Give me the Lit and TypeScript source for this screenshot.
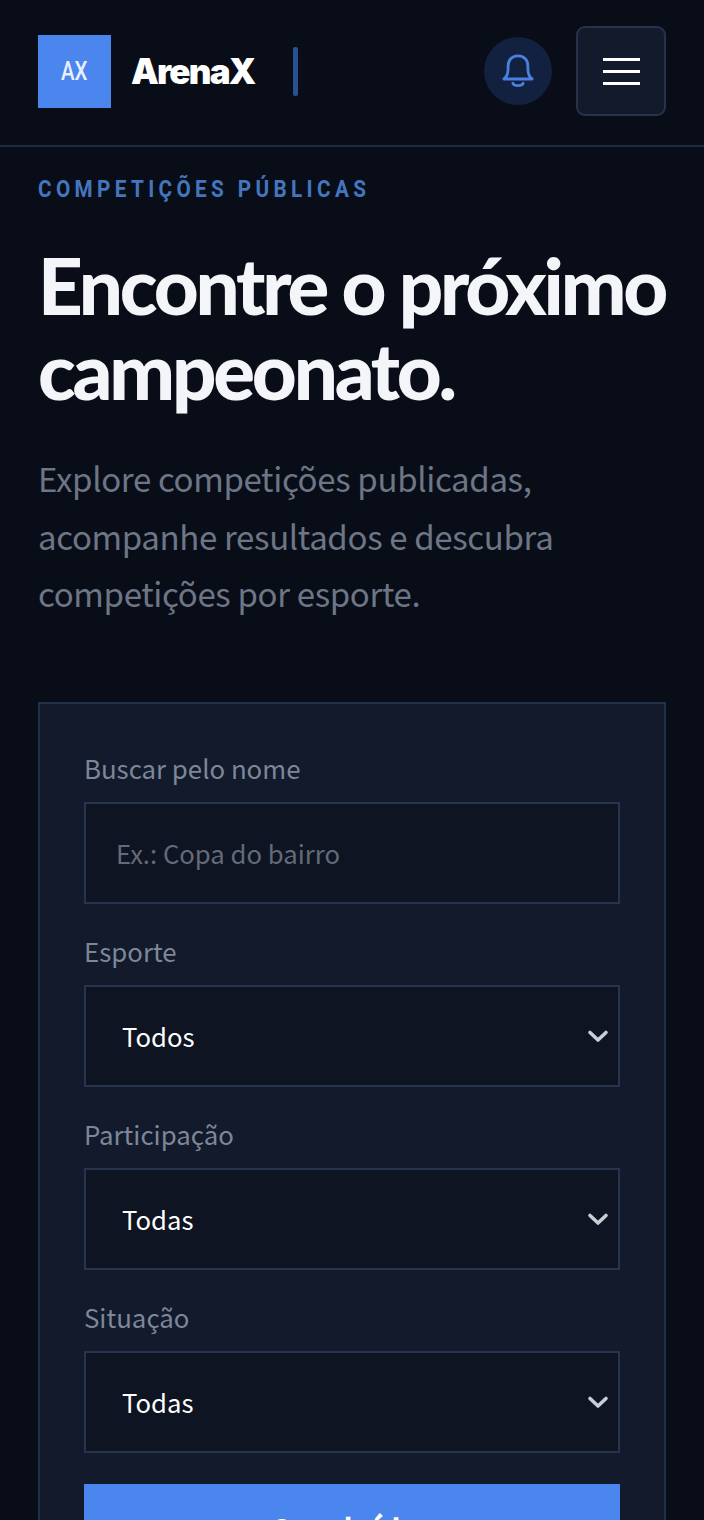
import { LitElement, html, css, svg } from "lit";
import { customElement } from "lit/decorators.js";

const SANS = css`"Noto Sans CJK SC", "Noto Sans", sans-serif`;

const chevron = svg`<path d="M3 4.500 L11 12 L19 4.500" fill="none" stroke="#c9cdd6" stroke-width="3.600" stroke-linecap="round" stroke-linejoin="round"/>`;

@customElement("app-root")
export class AppRoot extends LitElement {
  static styles = css`
    :host {
      display: block;
      height: 1520px;
      overflow: hidden;
      background: #090d18;
      font-family: ${SANS};
      color: #fff;
    }
    .header {
      height: 147px;
      box-sizing: border-box;
      padding: 0 38px 3px;
      display: flex;
      align-items: center;
      border-bottom: 2px solid #1f2c41;
    }
    .logo {
      flex: none;
      width: 73px;
      height: 73px;
      background: #4a86ee;
      display: flex;
      align-items: center;
      justify-content: center;
      font: 500 25px Roboto, sans-serif;
      color: #e8f0fe;
    }
    .logo span { transform: scaleX(0.82); }
    .brand {
      font: 900 35px Inter, sans-serif;
      letter-spacing: -1.800px;
      margin-left: 20px;
      color: #fff;
    }
    .divider {
      width: 5px;
      height: 49px;
      background: #2a518f;
      border-radius: 2px;
      margin-left: 39px;
    }
    .spacer { flex: 1; }
    .bell {
      width: 68px;
      height: 68px;
      margin-bottom: 1px;
      border-radius: 50%;
      background: #12213f;
      display: flex;
      align-items: center;
      justify-content: center;
    }
    .menu {
      width: 90px;
      height: 90px;
      box-sizing: border-box;
      margin-left: 24px;
      border-radius: 9px;
      border: 2px solid #26334a;
      background: #121a2b;
      display: flex;
      flex-direction: column;
      align-items: center;
      justify-content: center;
      gap: 9px;
    }
    .menu span {
      width: 37px;
      height: 3px;
      background: #fff;
    }
    .hero { padding: 29px 38px 0; }
    .eyebrow {
      font: 700 23px/28px "Roboto", sans-serif;
      letter-spacing: 4.850px;
      color: #4476bf;
      white-space: nowrap;
      transform: scaleX(0.9);
      transform-origin: left center;
    }
    h1 {
      margin: 39px 0 0;
      font: 900 78px/85px Lato, sans-serif;
      letter-spacing: -3.200px;
      color: #f3f5f9;
    }
    .lead {
      margin: 37px 0 0;
      font: 400 33px/57.500px ${SANS};
      letter-spacing: -0.350px;
      color: #6d7686;
    }
    .card {
      margin: 79px 38px 0;
      padding: 44px 44px 46px;
      border: 2px solid #22314a;
      background: #121a2c;
      display: flex;
      flex-direction: column;
      gap: 27px;
    }
    .field {
      display: flex;
      flex-direction: column;
      gap: 14px;
    }
    label {
      font: 400 25.800px/40px ${SANS};
      color: #7d8798;
    }
    .control { position: relative; }
    input, select {
      display: block;
      width: 100%;
      height: 102px;
      box-sizing: border-box;
      border: 2px solid #26344e;
      border-radius: 0;
      background: #0e1421;
      outline: none;
      appearance: none;
      font: 400 25.700px ${SANS};
      color: #fff;
    }
    input { padding: 0 30px; }
    input::placeholder { color: #646b78; opacity: 1; }
    select { padding: 0 36px; }
    .chev {
      position: absolute;
      right: 11px;
      top: 43px;
      pointer-events: none;
    }
    .submit {
      height: 88px;
      margin-top: 4px;
      border: 0;
      border-radius: 0;
      background: #4a86ee;
      color: #fff;
      font: 600 30px ${SANS};
    }
  `;

  private select(label: string, value: string) {
    return html`<div class="field">
      <label>${label}</label>
      <div class="control">
        <select><option>${value}</option></select>
        <svg class="chev" width="22" height="16" viewBox="0 0 22 16">${chevron}</svg>
      </div>
    </div>`;
  }

  render() {
    return html`
      <header class="header">
        <div class="logo"><span>AX</span></div>
        <div class="brand">ArenaX</div>
        <div class="divider"></div>
        <div class="spacer"></div>
        <div class="bell">
          <svg width="32" height="34" viewBox="0 0 34 36" fill="none" stroke="#4a80e0" stroke-width="3" stroke-linecap="round" stroke-linejoin="round">
            <path d="M2 26.500 C5.500 24 6.500 20.500 6.500 15 L6.500 12.500 C6.500 6 11 2 17 2 C23 2 27.500 6 27.500 12.500 L27.500 15 C27.500 20.500 28.500 24 32 26.500 Z"/>
            <path d="M11.500 31 C13 34.500 21 34.500 22.500 31"/>
          </svg>
        </div>
        <div class="menu"><span></span><span></span><span></span></div>
      </header>
      <section class="hero">
        <div class="eyebrow">COMPETIÇÕES PÚBLICAS</div>
        <h1>Encontre o próximo campeonato.</h1>
        <p class="lead">Explore competições publicadas, acompanhe resultados e descubra competições por esporte.</p>
      </section>
      <form class="card">
        <div class="field">
          <label>Buscar pelo nome</label>
          <div class="control"><input placeholder="Ex.: Copa do bairro" /></div>
        </div>
        ${this.select("Esporte", "Todos")}
        ${this.select("Participação", "Todas")}
        ${this.select("Situação", "Todas")}
        <button class="submit" type="button">Concluídos</button>
      </form>
    `;
  }
}
